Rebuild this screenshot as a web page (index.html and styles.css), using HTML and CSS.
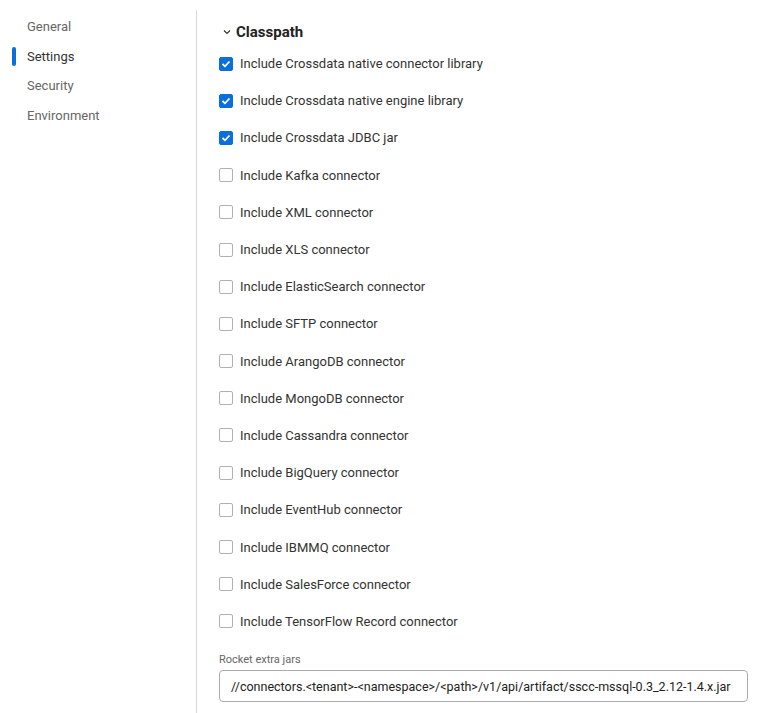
FILE: index.html
```html
<!DOCTYPE html>
<html>
<head>
<meta charset="utf-8">
<link rel="stylesheet" href="styles.css">
</head>
<body>
<div class="page">
  <nav class="sidebar">
    <div class="nav-item">General</div>
    <div class="nav-item active">Settings</div>
    <div class="nav-item">Security</div>
    <div class="nav-item">Environment</div>
  </nav>
  <main class="content">
    <div class="section-title">
      <svg class="chevron" width="8" height="6" viewBox="0 0 8 6"><path d="M1 1.5 L4 4.5 L7 1.5" fill="none" stroke="#333" stroke-width="1.2"/></svg>
      <span>Classpath</span>
    </div>
    <div class="options">
      <label class="opt"><span class="cb checked"><svg width="10" height="8" viewBox="0 0 10 8"><path d="M1.5 4 L4 6.3 L8.5 1.5" fill="none" stroke="#fff" stroke-width="1.8"/></svg></span>Include Crossdata native connector library</label>
      <label class="opt"><span class="cb checked"><svg width="10" height="8" viewBox="0 0 10 8"><path d="M1.5 4 L4 6.3 L8.5 1.5" fill="none" stroke="#fff" stroke-width="1.8"/></svg></span>Include Crossdata native engine library</label>
      <label class="opt"><span class="cb checked"><svg width="10" height="8" viewBox="0 0 10 8"><path d="M1.5 4 L4 6.3 L8.5 1.5" fill="none" stroke="#fff" stroke-width="1.8"/></svg></span>Include Crossdata JDBC jar</label>
      <label class="opt"><span class="cb"></span>Include Kafka connector</label>
      <label class="opt"><span class="cb"></span>Include XML connector</label>
      <label class="opt"><span class="cb"></span>Include XLS connector</label>
      <label class="opt"><span class="cb"></span>Include ElasticSearch connector</label>
      <label class="opt"><span class="cb"></span>Include SFTP connector</label>
      <label class="opt"><span class="cb"></span>Include ArangoDB connector</label>
      <label class="opt"><span class="cb"></span>Include MongoDB connector</label>
      <label class="opt"><span class="cb"></span>Include Cassandra connector</label>
      <label class="opt"><span class="cb"></span>Include BigQuery connector</label>
      <label class="opt"><span class="cb"></span>Include EventHub connector</label>
      <label class="opt"><span class="cb"></span>Include IBMMQ connector</label>
      <label class="opt"><span class="cb"></span>Include SalesForce connector</label>
      <label class="opt"><span class="cb"></span>Include TensorFlow Record connector</label>
    </div>
    <div class="field">
      <div class="field-label">Rocket extra jars</div>
      <div class="input">//connectors.&lt;tenant&gt;-&lt;namespace&gt;/&lt;path&gt;/v1/api/artifact/sscc-mssql-0.3_2.12-1.4.x.jar</div>
    </div>
  </main>
</div>
</body>
</html>
```
FILE: styles.css
```css
* { box-sizing: border-box; }
html, body { margin: 0; padding: 0; background: #fff; }
body { font-family: Roboto, "Noto Sans", sans-serif; color: #333; }
.page { display: flex; height: 713px; overflow: hidden; }
.sidebar { width: 196px; flex: none; padding-top: 17px; }
.nav-item { position: relative; height: 29.7px; line-height: 19px; padding-left: 27px; font-size: 13px; color: #666; }
.nav-item.active { color: #333; }
.nav-item.active::before { content: ""; position: absolute; left: 12px; top: 0; width: 4px; height: 19px; border-radius: 2px; background: #0a6fdb; }
.content { flex: 1; min-width: 0; margin-top: 10px; border-left: 1px solid #d5d8dd; padding-left: 22px; padding-right: 25px; }
.section-title { display: flex; align-items: center; height: 24px; margin-top: 10px; font-size: 15px; font-weight: 700; color: #222; }
.chevron { margin-left: 4px; margin-right: 5px; }
.options { margin-top: 1px; }
.opt { display: flex; align-items: center; height: 37.2px; font-size: 13px; color: #333; }
.cb { display: inline-flex; align-items: center; justify-content: center; width: 14px; height: 14px; border: 1px solid #aeb2b8; border-radius: 2px; margin-right: 7px; background: #fff; }
.cb.checked { background: #0a6fdb; border-color: #0a6fdb; }
.field { margin-top: 13px; }
.field-label { font-size: 11px; color: #666; margin-bottom: 4px; }
.input { height: 32px; border: 1px solid #a8acb2; border-radius: 4px; padding: 0 8px 0 11px; display: flex; align-items: center; font-size: 12.5px; color: #222; white-space: nowrap; overflow: hidden; }
```
